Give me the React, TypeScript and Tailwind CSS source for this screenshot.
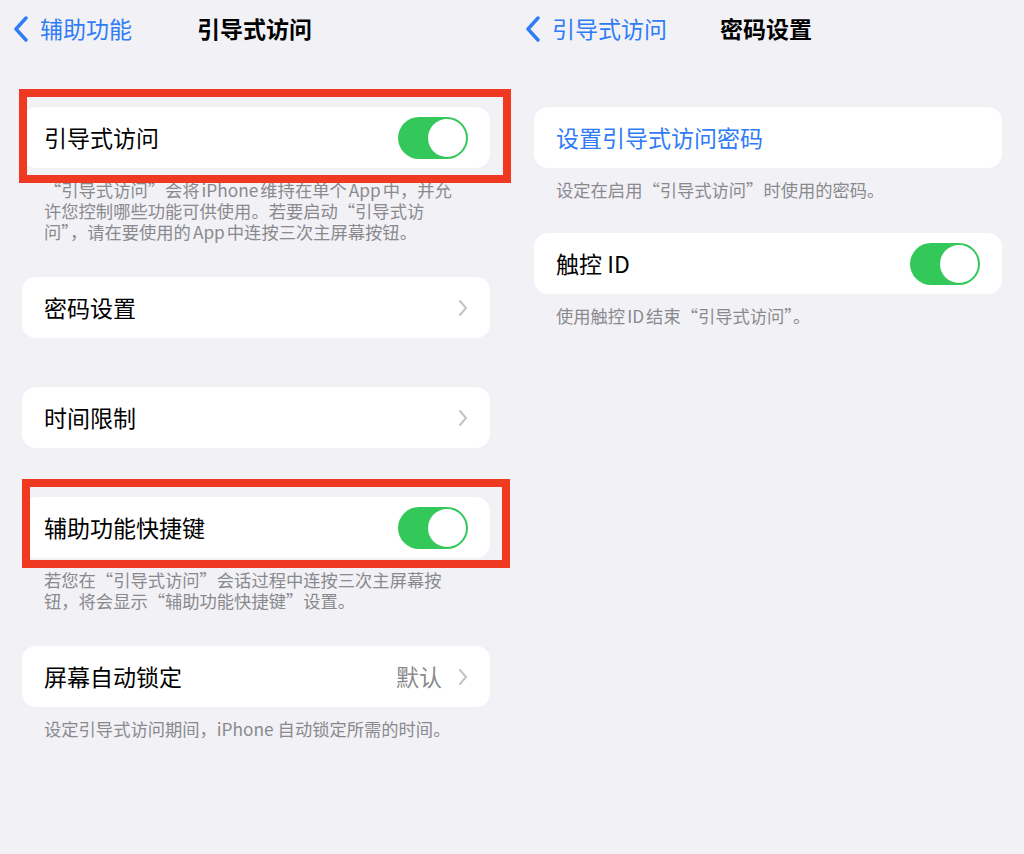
import React from "react";

const font = { fontFamily: '"Noto Sans CJK SC", "Noto Sans", sans-serif' };

function BackChevron() {
  return (
    <svg width="18" height="26" viewBox="0 0 18 26" className="shrink-0">
      <path d="M14 2 L4 13 L14 24" fill="none" stroke="#2f7cf6" strokeWidth="3.4" strokeLinecap="round" strokeLinejoin="round" />
    </svg>
  );
}

function RowChevron() {
  return (
    <svg width="10" height="18" viewBox="0 0 10 18" className="shrink-0">
      <path d="M2 2 L8 9 L2 16" fill="none" stroke="#c4c4c8" strokeWidth="2" strokeLinecap="round" strokeLinejoin="round" />
    </svg>
  );
}

function Toggle() {
  return (
    <div className="w-[70px] h-[42px] rounded-full bg-[#34c759] flex items-center justify-end p-[2px] shrink-0">
      <div className="w-[38px] h-[38px] rounded-full bg-white" />
    </div>
  );
}

function Header({ back, title, gap }: { back: string; title: string; gap: string }) {
  return (
    <div className="h-[57px] flex items-center pl-[12px]">
      <BackChevron />
      <span className="ml-[10px] text-[23px] text-[#2f7cf6] leading-none">{back}</span>
      <span className={`${gap} text-[23px] font-bold text-black leading-none`}>{title}</span>
    </div>
  );
}

function Card({ children }: { children: React.ReactNode }) {
  return (
    <div className="h-[61px] bg-white rounded-[14px] flex items-center pl-[22px] pr-[22px]">{children}</div>
  );
}

function Footer({ children }: { children: React.ReactNode }) {
  return <div className="pt-[11px] px-[22px] text-[17.3px] leading-[21px] text-[#8a8a8e]">{children}</div>;
}

function L({ children }: { children: React.ReactNode }) {
  return <span className="mx-[2px]">{children}</span>;
}

export default function App() {
  return (
    <div className="w-[1024px] h-[854px] bg-[#f1f1f6] flex" style={font}>
      {/* Left panel */}
      <div className="w-[512px] px-[22px] flex flex-col">
        <div className="-mx-[22px]">
          <Header back="辅助功能" title="引导式访问" gap="ml-[65px]" />
        </div>

        <div className="relative mt-[50px]">
          <Card>
            <span className="flex-1 text-[23px] text-black">引导式访问</span>
            <Toggle />
          </Card>
          <div className="absolute left-[-3px] right-[-21px] top-[-18px] bottom-[-15px] border-[8px] border-[#ef3a21] pointer-events-none" />
        </div>
        <Footer>
          <div>“引导式访问”会将<L>iPhone</L>维持在单个<L>App</L>中，并允</div>
          <div>许您控制哪些功能可供使用。若要启动“引导式访</div>
          <div>问”，请在要使用的<L>App</L>中连按三次主屏幕按钮。</div>
        </Footer>

        <div className="mt-[35px]">
          <Card>
            <span className="flex-1 text-[23px] text-black">密码设置</span>
            <RowChevron />
          </Card>
        </div>

        <div className="mt-[49px]">
          <Card>
            <span className="flex-1 text-[23px] text-black">时间限制</span>
            <RowChevron />
          </Card>
        </div>

        <div className="relative mt-[49px]">
          <Card>
            <span className="flex-1 text-[23px] text-black">辅助功能快捷键</span>
            <Toggle />
          </Card>
          <div className="absolute left-0 right-[-20px] top-[-18px] bottom-[-10px] border-[8px] border-[#ef3a21] pointer-events-none" />
        </div>
        <Footer>
          <div>若您在“引导式访问”会话过程中连按三次主屏幕按</div>
          <div>钮，将会显示“辅助功能快捷键”设置。</div>
        </Footer>

        <div className="mt-[35px]">
          <Card>
            <span className="flex-1 text-[23px] text-black">屏幕自动锁定</span>
            <span className="text-[23px] text-[#8a8a8e] mr-[16px]">默认</span>
            <RowChevron />
          </Card>
        </div>
        <Footer>
          <div>设定引导式访问期间，<span className="mr-[4px]">iPhone</span>自动锁定所需的时间。</div>
        </Footer>
      </div>

      {/* Right panel */}
      <div className="w-[512px] px-[22px] flex flex-col">
        <div className="-mx-[22px]">
          <Header back="引导式访问" title="密码设置" gap="ml-[53px]" />
        </div>

        <div className="mt-[50px]">
          <Card>
            <span className="flex-1 text-[23px] text-[#2f7cf6]">设置引导式访问密码</span>
          </Card>
        </div>
        <Footer>
          <div>设定在启用“引导式访问”时使用的密码。</div>
        </Footer>

        <div className="mt-[33px]">
          <Card>
            <span className="flex-1 text-[23px] text-black">触控 ID</span>
            <Toggle />
          </Card>
        </div>
        <Footer>
          <div>使用触控<L>ID</L>结束“引导式访问”。</div>
        </Footer>
      </div>
    </div>
  );
}
